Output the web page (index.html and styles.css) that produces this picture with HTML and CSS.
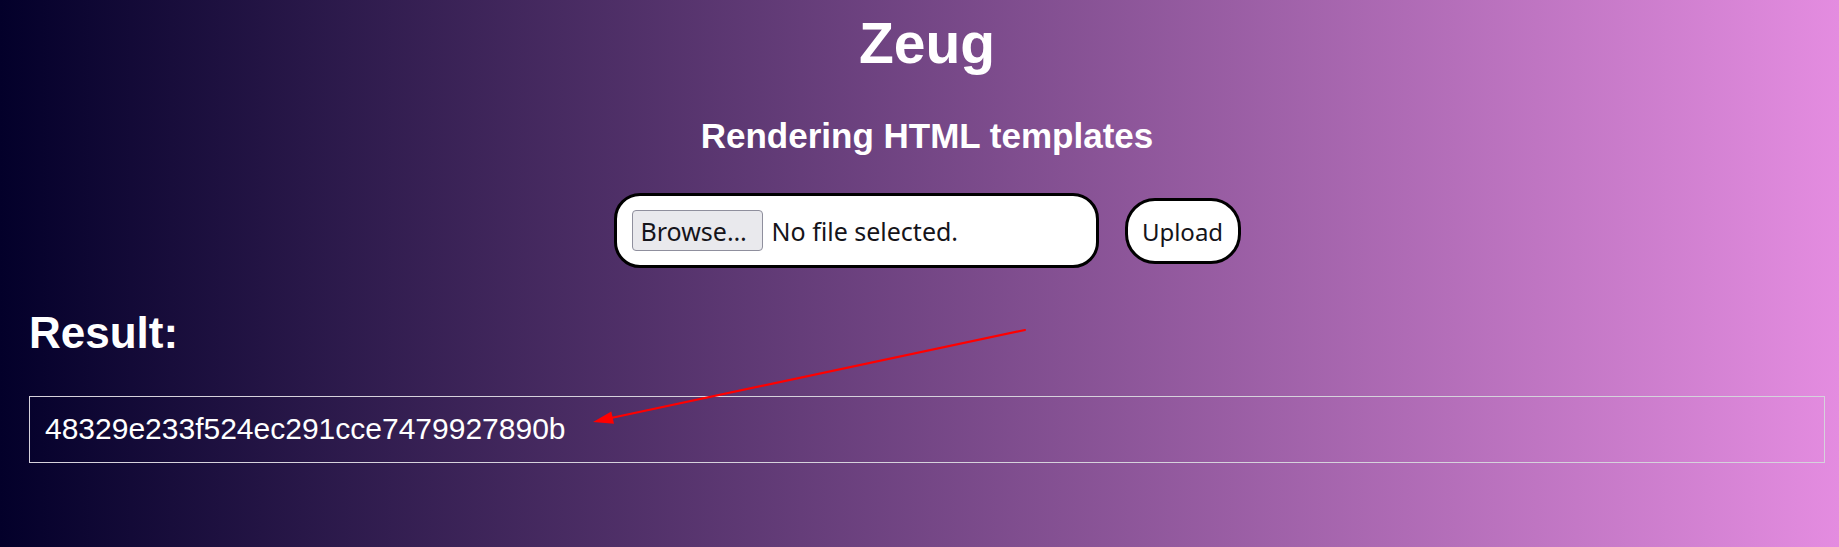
FILE: index.html
```html
<!DOCTYPE html>
<html lang="en">
<head>
<meta charset="utf-8">
<title>Zeug</title>
<link rel="stylesheet" href="styles.css">
</head>
<body>
<main class="page">
  <h1 class="title">Zeug</h1>
  <h2 class="subtitle">Rendering HTML templates</h2>
  <form class="upload-form">
    <label class="file-box">
      <span class="browse">Browse…</span>
      <span class="file-status">No file selected.</span>
    </label>
    <button type="button" class="upload-btn">Upload</button>
  </form>
  <h2 class="result-title">Result:</h2>
  <div class="result-box">48329e233f524ec291cce7479927890b</div>
</main>
<svg class="annotation" width="440" height="105" viewBox="0 0 440 105" aria-hidden="true">
  <line x1="435" y1="5" x2="21" y2="93" stroke="#ff0000" stroke-width="2.2" stroke-linecap="round"/>
  <polygon points="3,97 24,98.8 21.3,86.6" fill="#ff0000"/>
</svg>
</body>
</html>
```

FILE: styles.css
```css
html, body {
  margin: 0;
  padding: 0;
}

body {
  min-height: 547px;
  background: linear-gradient(to right, #03002a 0%, #e48ce0 100%);
  font-family: "Liberation Sans", Arial, sans-serif;
  color: #ffffff;
  position: relative;
}

.page {
  padding: 10px 14px 0 29px;
  display: flex;
  flex-direction: column;
}

.title {
  margin: 0;
  font-size: 57px;
  font-weight: bold;
  text-align: center;
  line-height: 66px;
}

.subtitle {
  margin: 40px 0 0;
  font-size: 35px;
  font-weight: bold;
  text-align: center;
  line-height: 40.2px;
}

.upload-form {
  margin-top: 37px;
  display: flex;
  justify-content: center;
  align-items: center;
  gap: 26px;
  font-family: "Noto Sans", "DejaVu Sans", sans-serif;
  font-size: 24px;
  color: #15141a;
}

.file-box {
  box-sizing: border-box;
  width: 485px;
  height: 75px;
  border: 3px solid #000000;
  border-radius: 26px;
  background: #ffffff;
  padding: 0 15px;
  display: flex;
  align-items: center;
  gap: 9px;
  font-size: 25px;
}

.browse {
  box-sizing: border-box;
  width: 131px;
  height: 41px;
  border: 1px solid #8f8f9d;
  border-radius: 4px;
  background: #e9e9ed;
  padding-left: 8px;
  display: flex;
  align-items: center;
  line-height: 32px;
  white-space: nowrap;
}

.file-status {
  line-height: 32px;
  white-space: nowrap;
}

.upload-btn {
  box-sizing: border-box;
  width: 116px;
  height: 66px;
  border: 3px solid #000000;
  border-radius: 30px;
  background: #ffffff;
  font: inherit;
  color: #15141a;
  padding: 0;
  margin-top: 1px;
}

.result-title {
  margin: 40px 0 0;
  font-size: 44px;
  font-weight: bold;
  line-height: 50.6px;
}

.result-box {
  margin-top: 37px;
  box-sizing: border-box;
  height: 67px;
  border: 1px solid #d6d2dc;
  padding: 15px 15px;
  font-size: 30px;
  line-height: 34.5px;
  white-space: nowrap;
}

.annotation {
  position: absolute;
  left: 590px;
  top: 325px;
}
```
